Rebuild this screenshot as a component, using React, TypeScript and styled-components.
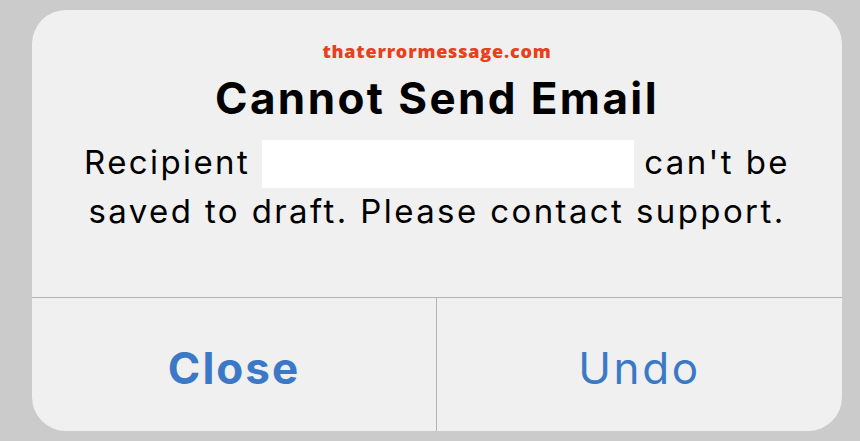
import React from "react";
import styled, { createGlobalStyle } from "styled-components";

const GlobalStyle = createGlobalStyle`
  html, body {
    margin: 0;
    padding: 0;
    background: #cbcbcb;
    width: 860px;
    height: 441px;
    overflow: hidden;
  }
  body {
    font-family: Inter, "Liberation Sans", Arial, sans-serif;
    -webkit-font-smoothing: antialiased;
  }
`;

const Page = styled.div`
  width: 860px;
  height: 441px;
  padding: 10px 18px 10px 32px;
  box-sizing: border-box;
`;

const Alert = styled.div`
  width: 810px;
  height: 421px;
  background: #f0f0f0;
  border-radius: 34px;
  display: flex;
  flex-direction: column;
  overflow: hidden;
`;

const Content = styled.div`
  height: 288px;
  border-bottom: 1px solid #b4b4b4;
  display: flex;
  flex-direction: column;
  align-items: center;
  padding-top: 31px;
  box-sizing: border-box;
`;

const Watermark = styled.div`
  font-family: "Open Sans", sans-serif;
  font-weight: 800;
  font-size: 18px;
  line-height: 20px;
  color: #e8401c;
  letter-spacing: 0.8px;
`;

const Title = styled.h1`
  margin: 11px 0 0;
  font-size: 44px;
  font-weight: 700;
  line-height: 52px;
  color: #000;
  letter-spacing: 2.4px;
`;

const Message = styled.p`
  margin: 15px 0 0;
  font-size: 33px;
  font-weight: 400;
  line-height: 47px;
  color: #000;
  text-align: center;
  letter-spacing: 2.4px;
`;

const Redacted = styled.span`
  display: inline-block;
  width: 372px;
  height: 48px;
  background: #fff;
  vertical-align: -14px;
  margin: 0 10px 0 12px;
`;

const Actions = styled.div`
  flex: 1;
  display: grid;
  grid-template-columns: 405px 1fr;
`;

const ActionButton = styled.button<{ $bold?: boolean; $divider?: boolean }>`
  border: 0;
  background: transparent;
  font-family: inherit;
  font-size: 44px;
  font-weight: ${(p) => (p.$bold ? 700 : 400)};
  letter-spacing: ${(p) => (p.$bold ? "2px" : "2.6px")};
  color: #3b79c6;
  border-right: ${(p) => (p.$divider ? "1px solid #b4b4b4" : "0")};
  padding: 6px 0 0;
  cursor: pointer;
`;

export default function App() {
  return (
    <>
      <GlobalStyle />
      <Page>
        <Alert>
          <Content>
            <Watermark>thaterrormessage.com</Watermark>
            <Title>Cannot Send Email</Title>
            <Message>
              Recipient<Redacted />can't be
              <br />
              saved to draft. Please contact support.
            </Message>
          </Content>
          <Actions>
            <ActionButton $bold $divider>
              Close
            </ActionButton>
            <ActionButton>Undo</ActionButton>
          </Actions>
        </Alert>
      </Page>
    </>
  );
}
